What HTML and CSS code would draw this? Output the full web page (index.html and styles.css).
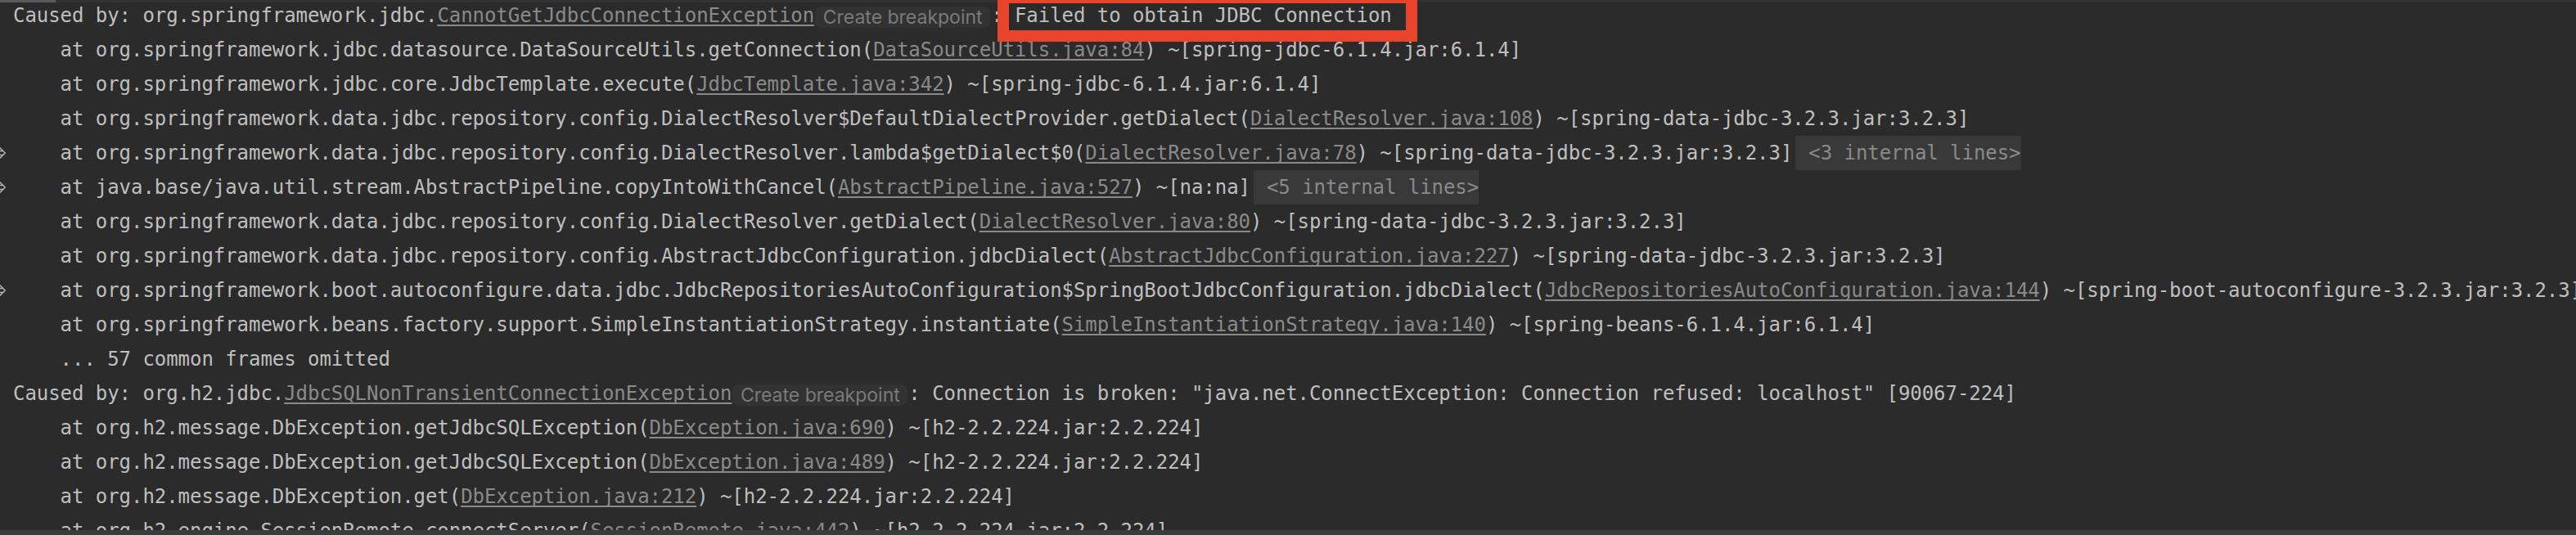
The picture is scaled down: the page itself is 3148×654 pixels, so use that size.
FILE: index.html
```html
<!DOCTYPE html>
<html lang="en">
  <head>
    <meta charset="UTF-8">
    <title>Run console</title>
    <link rel="stylesheet" href="styles.css">
  </head>
  <body>
    <div class="console">
      <div class="scroll-top"><div class="thumb"></div></div>

      <div class="log">
        <div class="line"><span class="gutter"></span><span class="text">Caused by: org.springframework.jdbc.<a class="src">CannotGetJdbcConnectionException</a><span class="pill">Create breakpoint</span>: <span class="flagged">Failed to obtain JDBC Connection</span></span></div>
        <div class="line"><span class="gutter"></span><span class="text">    at org.springframework.jdbc.datasource.DataSourceUtils.getConnection(<a class="src">DataSourceUtils.java:84</a>) ~[spring-jdbc-6.1.4.jar:6.1.4]</span></div>
        <div class="line"><span class="gutter"></span><span class="text">    at org.springframework.jdbc.core.JdbcTemplate.execute(<a class="src">JdbcTemplate.java:342</a>) ~[spring-jdbc-6.1.4.jar:6.1.4]</span></div>
        <div class="line"><span class="gutter"></span><span class="text">    at org.springframework.data.jdbc.repository.config.DialectResolver$DefaultDialectProvider.getDialect(<a class="src">DialectResolver.java:108</a>) ~[spring-data-jdbc-3.2.3.jar:3.2.3]</span></div>
        <div class="line"><span class="gutter"><svg class="fold" width="9" height="14" viewBox="0 0 9 14"><path d="M0 4.5H3.5M0 9.5H3.5M1 0.8L7.2 7L1 13.2"/></svg></span><span class="text">    at org.springframework.data.jdbc.repository.config.DialectResolver.lambda$getDialect$0(<a class="src">DialectResolver.java:78</a>) ~[spring-data-jdbc-3.2.3.jar:3.2.3]<span class="folded">&lt;3 internal lines&gt;</span></span></div>
        <div class="line"><span class="gutter"><svg class="fold" width="9" height="14" viewBox="0 0 9 14"><path d="M0 4.5H3.5M0 9.5H3.5M1 0.8L7.2 7L1 13.2"/></svg></span><span class="text">    at java.base/java.util.stream.AbstractPipeline.copyIntoWithCancel(<a class="src">AbstractPipeline.java:527</a>) ~[na:na]<span class="folded">&lt;5 internal lines&gt;</span></span></div>
        <div class="line"><span class="gutter"></span><span class="text">    at org.springframework.data.jdbc.repository.config.DialectResolver.getDialect(<a class="src">DialectResolver.java:80</a>) ~[spring-data-jdbc-3.2.3.jar:3.2.3]</span></div>
        <div class="line"><span class="gutter"></span><span class="text">    at org.springframework.data.jdbc.repository.config.AbstractJdbcConfiguration.jdbcDialect(<a class="src">AbstractJdbcConfiguration.java:227</a>) ~[spring-data-jdbc-3.2.3.jar:3.2.3]</span></div>
        <div class="line"><span class="gutter"><svg class="fold" width="9" height="14" viewBox="0 0 9 14"><path d="M0 4.5H3.5M0 9.5H3.5M1 0.8L7.2 7L1 13.2"/></svg></span><span class="text">    at org.springframework.boot.autoconfigure.data.jdbc.JdbcRepositoriesAutoConfiguration$SpringBootJdbcConfiguration.jdbcDialect(<a class="src">JdbcRepositoriesAutoConfiguration.java:144</a>) ~[spring-boot-autoconfigure-3.2.3.jar:3.2.3]</span></div>
        <div class="line"><span class="gutter"></span><span class="text">    at org.springframework.beans.factory.support.SimpleInstantiationStrategy.instantiate(<a class="src">SimpleInstantiationStrategy.java:140</a>) ~[spring-beans-6.1.4.jar:6.1.4]</span></div>
        <div class="line"><span class="gutter"></span><span class="text">    ... 57 common frames omitted</span></div>
        <div class="line"><span class="gutter"></span><span class="text">Caused by: org.h2.jdbc.<a class="src">JdbcSQLNonTransientConnectionException</a><span class="pill">Create breakpoint</span>: Connection is broken: "java.net.ConnectException: Connection refused: localhost" [90067-224]</span></div>
        <div class="line"><span class="gutter"></span><span class="text">    at org.h2.message.DbException.getJdbcSQLException(<a class="src">DbException.java:690</a>) ~[h2-2.2.224.jar:2.2.224]</span></div>
        <div class="line"><span class="gutter"></span><span class="text">    at org.h2.message.DbException.getJdbcSQLException(<a class="src">DbException.java:489</a>) ~[h2-2.2.224.jar:2.2.224]</span></div>
        <div class="line"><span class="gutter"></span><span class="text">    at org.h2.message.DbException.get(<a class="src">DbException.java:212</a>) ~[h2-2.2.224.jar:2.2.224]</span></div>
        <div class="line"><span class="gutter"></span><span class="text">    at org.h2.engine.SessionRemote.connectServer(<a class="src">SessionRemote.java:442</a>) ~[h2-2.2.224.jar:2.2.224]</span></div>
      </div>

      <div class="scroll-bottom"></div>
    </div>
  </body>
</html>
```

FILE: styles.css
```css
/* Page */
body {
  margin: 0;
  background-color: #2b2b2b;
  overflow: hidden;
}

.console {
  position: relative;
  width: 3148px;
  height: 654px;
  overflow: hidden;
  background-color: #2b2b2b;
  color: #bfbfbf;
  font-family: "DejaVu Sans Mono", "Liberation Mono", monospace;
  font-size: 24px;
  letter-spacing: -0.05px;
}

/* Scrollbars laid over the log */
.scroll-top {
  position: absolute;
  top: 0;
  left: 0;
  right: 0;
  height: 3px;
  background-color: #313233;
  z-index: 1;
}

.scroll-top .thumb {
  width: 68px;
  height: 3px;
  background-color: #595c60;
}

.scroll-bottom {
  position: absolute;
  left: 0;
  right: 0;
  bottom: 0;
  height: 6px;
  background-color: #393b3d;
  z-index: 1;
}

/* Log lines */
.log {
  margin-top: -2px;
}

.line {
  display: flex;
  height: 42px;
  line-height: 42px;
  white-space: pre;
}

.gutter {
  flex: 0 0 16px;
  display: flex;
  align-items: center;
}

.fold {
  fill: none;
  stroke: #b4b6ba;
  stroke-width: 1.5;
  stroke-linecap: round;
  stroke-linejoin: round;
  margin-left: -1px;
}

.src {
  color: #8a8a8a;
  text-decoration: underline;
  text-decoration-thickness: 2px;
  text-underline-offset: 3px;
  text-decoration-skip-ink: none;
}

/* Inlays */
.pill {
  display: inline-block;
  vertical-align: top;
  width: 214px;
  height: 26px;
  margin: 10px 1px 0;
  line-height: 26px;
  border-radius: 7px;
  background-color: #323232;
  color: #7a7a7a;
  font-family: Inter, "Noto Sans", sans-serif;
  font-size: 23px;
  letter-spacing: 0;
  text-align: center;
}

.folded {
  display: inline-block;
  vertical-align: top;
  height: 42px;
  margin-left: 4px;
  padding-left: 16px;
  background-color: #393939;
  color: #8a8a8a;
}

/* Red annotation frame */
.flagged {
  display: inline-block;
  vertical-align: top;
  position: relative;
}

.flagged::after {
  content: "";
  position: absolute;
  left: -21px;
  right: -31px;
  top: -8px;
  bottom: -11px;
  border: 14px solid #e8432b;
  z-index: 2;
}
```
